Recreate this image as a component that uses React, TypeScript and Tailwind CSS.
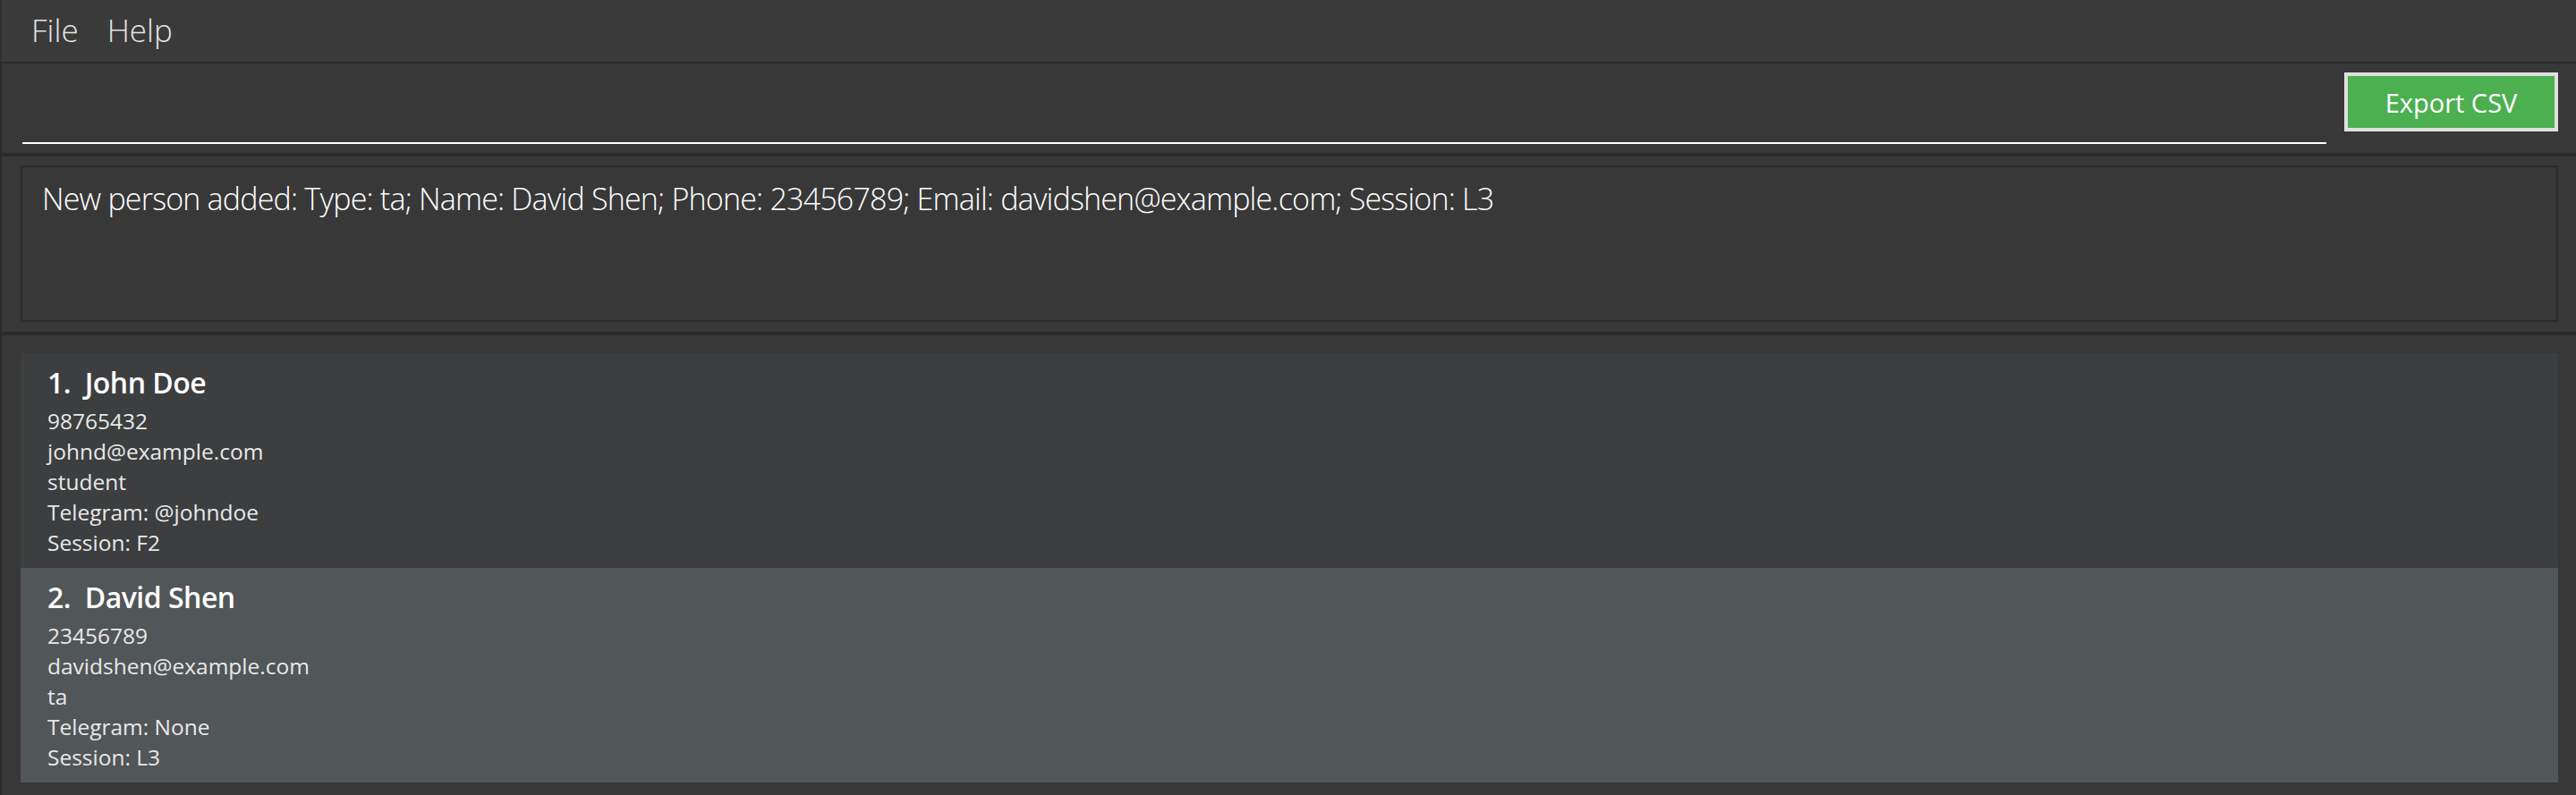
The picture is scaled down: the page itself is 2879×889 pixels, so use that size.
import React from "react";

type Person = {
  idx: number;
  name: string;
  phone: string;
  email: string;
  type: string;
  telegram: string;
  session: string;
};

const people: Person[] = [
  { idx: 1, name: "John Doe", phone: "98765432", email: "johnd@example.com", type: "student", telegram: "@johndoe", session: "F2" },
  { idx: 2, name: "David Shen", phone: "23456789", email: "davidshen@example.com", type: "ta", telegram: "None", session: "L3" },
];

function Card({ p, odd }: { p: Person; odd: boolean }) {
  return (
    <div className={`h-[240px] pl-[30px] pt-[13px] ${odd ? "bg-[#515658]" : "bg-[#3c3e3f]"}`}>
      <div className="text-[32px] leading-[40px] font-semibold tracking-[-0.5px] text-white whitespace-pre">
        {`${p.idx}.  ${p.name}`}
      </div>
      <div className="mt-[6px] text-[24.5px] leading-[34px] text-[#e8e8e8]">
        <div>{p.phone}</div>
        <div>{p.email}</div>
        <div>{p.type}</div>
        <div>Telegram: {p.telegram}</div>
        <div>Session: {p.session}</div>
      </div>
    </div>
  );
}

export default function App() {
  return (
    <div
      className="w-[2879px] h-[889px] bg-[#383838] flex flex-col overflow-hidden"
      style={{ fontFamily: '"Open Sans", "Noto Sans", sans-serif' }}
    >
      {/* Menu bar */}
      <div className="h-[69px] bg-[#3a3a3a] flex items-center pl-[33px] gap-[32px] text-[35px] font-light text-[#e4e4e4] border-l-2 border-[#303030]">
        <span>File</span>
        <span>Help</span>
      </div>

      <div className="flex-1 flex flex-col border-l-2 border-[#2b2b2b]">
        {/* Command box */}
        <div className="h-[102px] border-t-2 border-[#2b2b2b] flex pl-[23px] pr-[20px]">
          <div className="flex-1 flex flex-col justify-end pb-[10px]">
            <div className="h-[2px] bg-white" />
          </div>
          <div className="ml-[20px] pt-[10px]">
            <button className="w-[239px] h-[66px] bg-[#4caf50] border-4 border-[#e0e0e0] text-white text-[29px] leading-none flex items-center justify-center">
              Export CSV
            </button>
          </div>
        </div>

        <div className="h-[4px] bg-[#2b2b2b]" />

        {/* Result display */}
        <div className="h-[196px] pt-[10px] pb-[11px] pl-[21px] pr-[20px] flex flex-col">
          <div className="flex-1 border-2 border-[#2b2b2b] bg-[#383838] pl-[22px] pt-[12px]">
            <div className="text-[34px] leading-[46px] font-light tracking-[-0.8px] text-white whitespace-nowrap">
              New person added: Type: ta; Name: David Shen; Phone: 23456789; Email: davidshen@example.com; Session: L3
            </div>
          </div>
        </div>

        <div className="h-[4px] bg-[#2b2b2b]" />

        {/* Person list */}
        <div className="flex-1 pt-[20px] pl-[21px] pr-[20px] flex flex-col">
          {people.map((p, i) => (
            <Card key={p.idx} p={p} odd={i % 2 === 1} />
          ))}
        </div>
      </div>
    </div>
  );
}
